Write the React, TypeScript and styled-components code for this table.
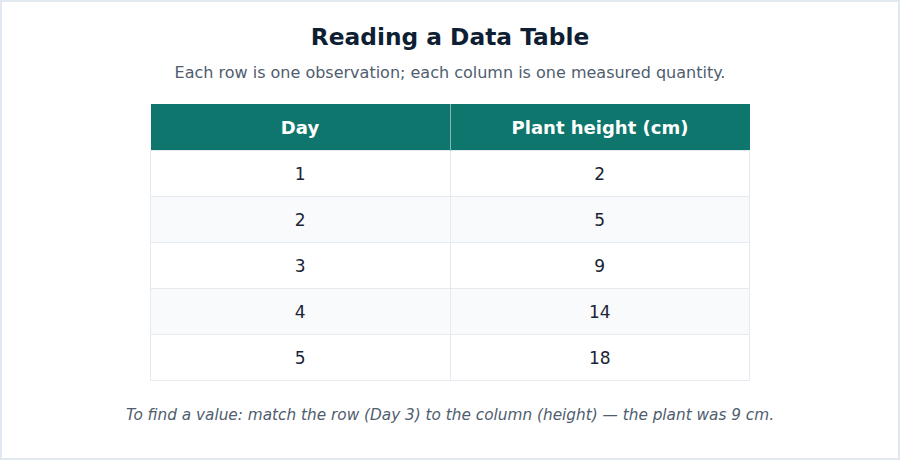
import React from "react";
import styled, { createGlobalStyle } from "styled-components";

const Global = createGlobalStyle`
  html, body { margin: 0; padding: 0; background: #ffffff; }
  body { font-family: "DejaVu Sans", Verdana, sans-serif; }
`;

const Frame = styled.div`
  box-sizing: border-box;
  width: 900px;
  height: 460px;
  border: 2px solid #e2e8f0;
  background: #ffffff;
  display: flex;
  flex-direction: column;
  align-items: center;
  padding-top: 21px;
`;

const Title = styled.h1`
  margin: 0;
  font-size: 23.3px;
  line-height: 28px;
  font-weight: 700;
  color: #0f1f33;
`;

const Subtitle = styled.p`
  margin: 12px 0 0;
  font-size: 16px;
  line-height: 20px;
  color: #4f5d6e;
`;

const Table = styled.table`
  margin-top: 21px;
  width: 600px;
  border-collapse: collapse;
  table-layout: fixed;
`;

const HeadCell = styled.th`
  height: 46px;
  padding: 0;
  background: #0f766e;
  color: #ffffff;
  font-size: 18px;
  font-weight: 700;
  text-align: center;
  border: none;
  & + & { border-left: 1px solid #80b8b2; }
`;

const Row = styled.tr<{ $alt: boolean }>`
  background: ${(p) => (p.$alt ? "#f8fafc" : "#ffffff")};
`;

const Cell = styled.td`
  height: 45px;
  padding: 0;
  border: 1px solid #e5eaf0;
  text-align: center;
  font-size: 17px;
  color: #1a2436;
`;

const Note = styled.p`
  margin: 24px 0 0;
  font-size: 15.3px;
  line-height: 20px;
  font-style: italic;
  color: #4f5d6e;
`;

const rows = [
  [1, 2],
  [2, 5],
  [3, 9],
  [4, 14],
  [5, 18],
];

export default function App() {
  return (
    <>
      <Global />
      <Frame>
        <Title>Reading a Data Table</Title>
        <Subtitle>Each row is one observation; each column is one measured quantity.</Subtitle>
        <Table>
          <thead>
            <tr>
              <HeadCell>Day</HeadCell>
              <HeadCell>Plant height (cm)</HeadCell>
            </tr>
          </thead>
          <tbody>
            {rows.map(([d, h], i) => (
              <Row key={d} $alt={i % 2 === 1}>
                <Cell>{d}</Cell>
                <Cell>{h}</Cell>
              </Row>
            ))}
          </tbody>
        </Table>
        <Note>To find a value: match the row (Day 3) to the column (height) — the plant was 9 cm.</Note>
      </Frame>
    </>
  );
}
